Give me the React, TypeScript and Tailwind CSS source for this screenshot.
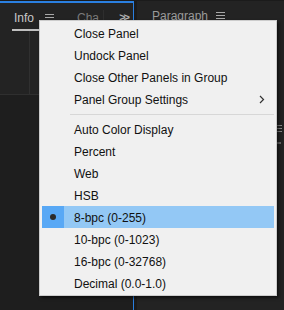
import React from 'react';

const font = { fontFamily: '"Liberation Sans", Arial, sans-serif' };

type Item = { label: string; sub?: boolean; checked?: boolean };

const groupA: Item[] = [
  { label: 'Close Panel' },
  { label: 'Undock Panel' },
  { label: 'Close Other Panels in Group' },
  { label: 'Panel Group Settings', sub: true },
];

const groupB: Item[] = [
  { label: 'Auto Color Display' },
  { label: 'Percent' },
  { label: 'Web' },
  { label: 'HSB' },
  { label: '8-bpc (0-255)', checked: true },
  { label: '10-bpc (0-1023)' },
  { label: '16-bpc (0-32768)' },
  { label: 'Decimal (0.0-1.0)' },
];

const Burger = () => (
  <span className="flex flex-col gap-[2px] w-[9px]">
    <span className="h-[1px] bg-[#a8a8a8]" />
    <span className="h-[1px] bg-[#a8a8a8]" />
    <span className="h-[1px] bg-[#a8a8a8]" />
  </span>
);

const MenuRow = ({ item }: { item: Item }) => (
  <div className={`mx-[2px] h-[22px] flex items-center ${item.checked ? 'bg-[#93c8f5]' : ''}`}>
    <div className={`w-[22px] h-full flex items-center justify-center ${item.checked ? 'bg-[#58a8f5]' : ''}`}>
      {item.checked && <span className="w-[6px] h-[6px] rounded-full bg-[#2b2b2b]" />}
    </div>
    <span className="ml-[10px] pt-[1px] flex-1 text-[12px] text-[#111] leading-none">{item.label}</span>
    {item.sub && (
      <svg width="6" height="9" viewBox="0 0 6 9" className="mr-[9px]">
        <path d="M1 1 L4.5 4.5 L1 8" fill="none" stroke="#333" strokeWidth="1.2" />
      </svg>
    )}
  </div>
);

export default function App() {
  return (
    <div className="relative w-[284px] h-[310px] bg-[#1b1b1b] overflow-hidden flex gap-[3px] pt-[1px]" style={font}>
      {/* left panel group */}
      <div className="w-[134px] h-full border-t-2 border-r border-[#2a7fe0] bg-[#232323] flex flex-col">
        <div className="h-[26px] flex items-center pl-[14px] pt-[3px] text-[12px]">
          <span className="text-[#c8c8c8]">Info</span>
          <span className="ml-[11px]"><Burger /></span>
          <span className="ml-[23px] text-[#7a7a7a]">Cha</span>
          <span className="ml-[4px] w-[1px] h-[16px] bg-[#2e2e2e]" />
          <span className="ml-auto mr-[5px] text-[#b0b0b0] text-[11px] font-bold tracking-[-2px]">&gt;&gt;</span>
        </div>
        <div className="ml-[12px] w-[30px] h-[2px] bg-[#c0c0c0]" />
        <div className="flex h-[64px] border-b border-[#2f2f2f]">
          <div className="w-[30px] border-r border-[#303030]" />
        </div>
        <div className="flex-1 bg-[#1e1e1e]" />
      </div>

      {/* right panel group */}
      <div className="flex-1 h-full bg-[#232323] flex flex-col">
        <div className="h-[26px] flex items-center pl-[15px] pt-[3px] text-[12px]">
          <span className="text-[#9a9a9a]">Paragraph</span>
          <span className="ml-[8px]"><Burger /></span>
        </div>
        <div className="flex-1 flex justify-end">
          <div className="w-[7px] flex flex-col pt-[98px] gap-[2px]">
            <span className="h-[1px] w-[5px] bg-[#8a8a8a]" />
            <span className="h-[1px] w-[5px] bg-[#8a8a8a]" />
            <span className="h-[1px] w-[5px] bg-[#8a8a8a]" />
            <span className="mt-[8px] h-[2px] w-[4px] bg-[#6a6a6a]" />
          </div>
        </div>
      </div>

      {/* context menu */}
      <div className="absolute left-[39px] top-[20px] w-[238px] h-[276px] bg-[#f0f0f0] border border-[#cccccc] shadow-[2px_2px_3px_rgba(0,0,0,0.6)] py-[1px]">
        {groupA.map(i => <MenuRow key={i.label} item={i} />)}
        <div className="h-[8px] flex items-center pl-[30px] pr-[2px]">
          <div className="w-full h-[1px] bg-[#d7d7d7]" />
        </div>
        {groupB.map(i => <MenuRow key={i.label} item={i} />)}
      </div>
    </div>
  );
}
